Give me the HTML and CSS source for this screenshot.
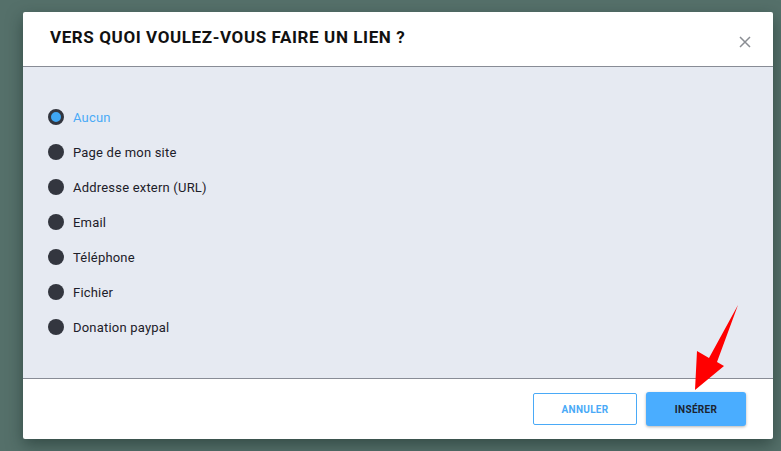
FILE: index.html
```html
<!DOCTYPE html>
<html lang="fr">
<head>
    <meta charset="UTF-8">
    <meta name="viewport" content="width=device-width, initial-scale=1.0">
    <title>Lien</title>
    <link rel="stylesheet" href="styles.css">
</head>
<body>
    <div class="modal">
        <div class="modal-header">
            <h1>VERS QUOI VOULEZ-VOUS FAIRE UN LIEN ?</h1>
            <button class="close" aria-label="Fermer">
                <svg width="12" height="12" viewBox="0 0 12 12">
                    <path d="M1 1 L11 11 M11 1 L1 11" stroke="#8a8d93" stroke-width="1.5"/>
                </svg>
            </button>
        </div>
        <div class="modal-body">
            <ul class="choices">
                <li class="selected"><span class="radio"></span>Aucun</li>
                <li><span class="radio"></span>Page de mon site</li>
                <li><span class="radio"></span>Addresse extern (URL)</li>
                <li><span class="radio"></span>Email</li>
                <li><span class="radio"></span>Téléphone</li>
                <li><span class="radio"></span>Fichier</li>
                <li><span class="radio"></span>Donation paypal</li>
            </ul>
        </div>
        <div class="modal-footer">
            <button class="btn btn-outline">ANNULER</button>
            <button class="btn btn-primary">INSÉRER</button>
        </div>
        <svg class="arrow" width="60" height="100" viewBox="0 0 60 100">
            <polygon points="53,1 32,58 39,62 10,86 12,47 24,54" fill="#ff0000"/>
        </svg>
    </div>
</body>
</html>
```

FILE: styles.css
```css
body {
    margin: 0;
    padding: 12px 0 0 23px;
    height: 451px;
    box-sizing: border-box;
    overflow: hidden;
    background-color: #55706a;
    font-family: Roboto, "Noto Sans", sans-serif;
}

.modal {
    position: relative;
    width: 750px;
    height: 427px;
    display: flex;
    flex-direction: column;
    background-color: white;
    border-radius: 2px;
    box-shadow: 0 6px 16px rgba(20, 40, 35, 0.5);
}

.modal-header {
    height: 54px;
    display: flex;
    align-items: center;
    justify-content: space-between;
    padding: 0 22px 0 27px;
    border-bottom: 1px solid #888c96;
}

.modal-header h1 {
    margin: 0;
    font-size: 17px;
    font-weight: 700;
    letter-spacing: 0.6px;
    color: #111;
    margin-top: -4px;
}

.close {
    border: none;
    background: none;
    padding: 0;
    display: flex;
    margin-top: 6px;
}

.modal-body {
    height: 312px;
    background-color: #e6eaf2;
    border-bottom: 1px solid #888c96;
    padding: 42px 0 0 25px;
    box-sizing: border-box;
}

.choices {
    list-style-type: none;
    margin: 0;
    padding: 0;
}

.choices li {
    display: flex;
    align-items: center;
    height: 16px;
    margin-bottom: 19px;
    font-size: 13px;
    letter-spacing: 0.2px;
    color: #1d2029;
}

.radio {
    width: 16px;
    height: 16px;
    border-radius: 50%;
    background-color: #33363f;
    margin-right: 9px;
    box-sizing: border-box;
}

.choices li.selected {
    color: #4aaaf7;
}

.choices li.selected .radio {
    background-color: #3fa6f3;
    border: 3px solid #33363f;
}

.modal-footer {
    flex: 1;
    display: flex;
    align-items: center;
    justify-content: flex-end;
    padding: 0 27px 0 0;
    gap: 9px;
}

.btn {
    font-family: Roboto, "Noto Sans", sans-serif;
    font-size: 10px;
    font-weight: 700;
    letter-spacing: 0.3px;
    border-radius: 2px;
    cursor: pointer;
}

.btn-outline {
    width: 104px;
    height: 32px;
    background-color: white;
    border: 1px solid #4aaaf7;
    color: #4aaaf7;
}

.btn-primary {
    width: 100px;
    height: 34px;
    background-color: #4aadff;
    border: none;
    border-radius: 3px;
    color: #1c2330;
    box-shadow: 0 1px 3px rgba(0, 0, 0, 0.3);
}

.arrow {
    position: absolute;
    left: 662px;
    top: 292px;
}
```
